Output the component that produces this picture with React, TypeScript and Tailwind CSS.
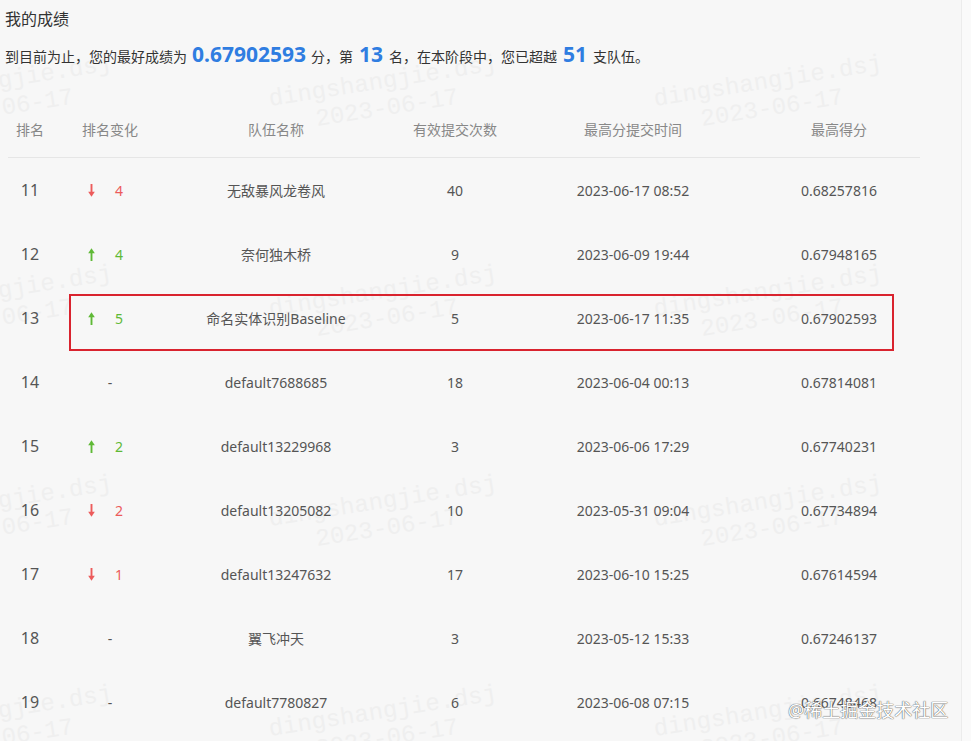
import React from "react";

type Row = {
  rank: number;
  change: number;
  team: string;
  count: number;
  time: string;
  score: string;
  mine?: boolean;
};

const rows: Row[] = [
  { rank: 11, change: -4, team: "无敌暴风龙卷风", count: 40, time: "2023-06-17 08:52", score: "0.68257816" },
  { rank: 12, change: 4, team: "奈何独木桥", count: 9, time: "2023-06-09 19:44", score: "0.67948165" },
  { rank: 13, change: 5, team: "命名实体识别Baseline", count: 5, time: "2023-06-17 11:35", score: "0.67902593", mine: true },
  { rank: 14, change: 0, team: "default7688685", count: 18, time: "2023-06-04 00:13", score: "0.67814081" },
  { rank: 15, change: 2, team: "default13229968", count: 3, time: "2023-06-06 17:29", score: "0.67740231" },
  { rank: 16, change: -2, team: "default13205082", count: 10, time: "2023-05-31 09:04", score: "0.67734894" },
  { rank: 17, change: -1, team: "default13247632", count: 17, time: "2023-06-10 15:25", score: "0.67614594" },
  { rank: 18, change: 0, team: "翼飞冲天", count: 3, time: "2023-05-12 15:33", score: "0.67246137" },
  { rank: 19, change: 0, team: "default7780827", count: 6, time: "2023-06-08 07:15", score: "0.66748468" },
];

const cols = "grid grid-cols-[44px_116px_216px_142px_214px_180px] items-center";

function Arrow({ up }: { up: boolean }) {
  return (
    <svg width="7" height="13" viewBox="0 0 7 13" className="shrink-0">
      {up ? (
        <>
          <path d="M3.5 3.5 V13" stroke="currentColor" strokeWidth="1.9" />
          <path d="M0.2 5.2 L3.5 0.2 L6.8 5.2 Z" fill="currentColor" />
        </>
      ) : (
        <>
          <path d="M3.5 0 V9.5" stroke="currentColor" strokeWidth="1.9" />
          <path d="M0.2 7.8 L3.5 12.8 L6.8 7.8 Z" fill="currentColor" />
        </>
      )}
    </svg>
  );
}

function Change({ value }: { value: number }) {
  if (value === 0) return <div className="text-center">-</div>;
  const up = value > 0;
  return (
    <div className={`flex items-center pl-[36px] ${up ? "text-[#5fb936]" : "text-[#ec5b5b]"}`}>
      <Arrow up={up} />
      <span className="ml-[20px]">{Math.abs(value)}</span>
    </div>
  );
}

const marks: { x: number; y: number }[] = [];
for (const y of [95, 305, 515, 725]) {
  for (const x of [0, 385, 770]) marks.push({ x, y });
}

export default function App() {
  return (
    <div className="relative flex min-h-screen overflow-hidden bg-[#f7f7f7] font-['Noto_Sans','Noto_Sans_CJK_SC',sans-serif] text-[#555]">
      {/* watermark layer */}
      <div className="pointer-events-none absolute inset-0">
        {marks.map((m, i) => (
          <div
            key={i}
            className="absolute w-[300px] -rotate-[9deg] text-center font-['Liberation_Mono',monospace] text-[24px] leading-[27px] text-[#efefef]"
            style={{ left: m.x - 150, top: m.y - 27 }}
          >
            <div>dingshangjie.dsj</div>
            <div>2023-06-17</div>
          </div>
        ))}
      </div>

      <main className="relative flex-1 pl-[5px]">
        <h3 className="pt-[7px] text-[16px] leading-[24px] text-[#333]">我的成绩</h3>
        <p className="mt-[9px] flex items-baseline text-[14px] leading-[28px] text-[#333]">
          到目前为止，您的最好成绩为
          <b className="mx-[5px] text-[21px] font-bold text-[#2f7de1]">0.67902593</b>
          分，第
          <b className="mx-[6px] text-[21px] font-bold text-[#2f7de1]">13</b>
          名，在本阶段中，您已超越
          <b className="mx-[6px] text-[21px] font-bold text-[#2f7de1]">51</b>
          支队伍。
        </p>

        <div className="ml-[3px] mt-[31px] w-[912px]">
          <div className={`${cols} h-[56px] border-b border-[#e6e6e6] text-[14px] text-[#888]`}>
            <div className="text-center">排名</div>
            <div className="text-center">排名变化</div>
            <div className="text-center">队伍名称</div>
            <div className="text-center">有效提交次数</div>
            <div className="text-center">最高分提交时间</div>
            <div className="pl-[18px] text-center">最高得分</div>
          </div>

          {rows.map((r) => (
            <div key={r.rank} className={`${cols} relative h-[64px] text-[14px]`}>
              <div className="text-center text-[16px]">{r.rank}</div>
              <Change value={r.change} />
              <div className="text-center">{r.team}</div>
              <div className="text-center">{r.count}</div>
              <div className="text-center">{r.time}</div>
              <div className="pl-[18px] text-center">{r.score}</div>
              {r.mine && (
                <div className="absolute left-[61px] top-[8px] h-[57px] w-[825px] border-2 border-[#d9232e]" />
              )}
            </div>
          ))}
        </div>
      </main>

      <div className="w-[10px] shrink-0 border-l border-[#ececec] bg-[#fafafa]" />

      <div className="pointer-events-none absolute left-[788px] top-[697px] text-[18px] text-white [text-shadow:0_0_1px_#555,0_0_1px_#555]">
        @稀土掘金技术社区
      </div>
    </div>
  );
}
